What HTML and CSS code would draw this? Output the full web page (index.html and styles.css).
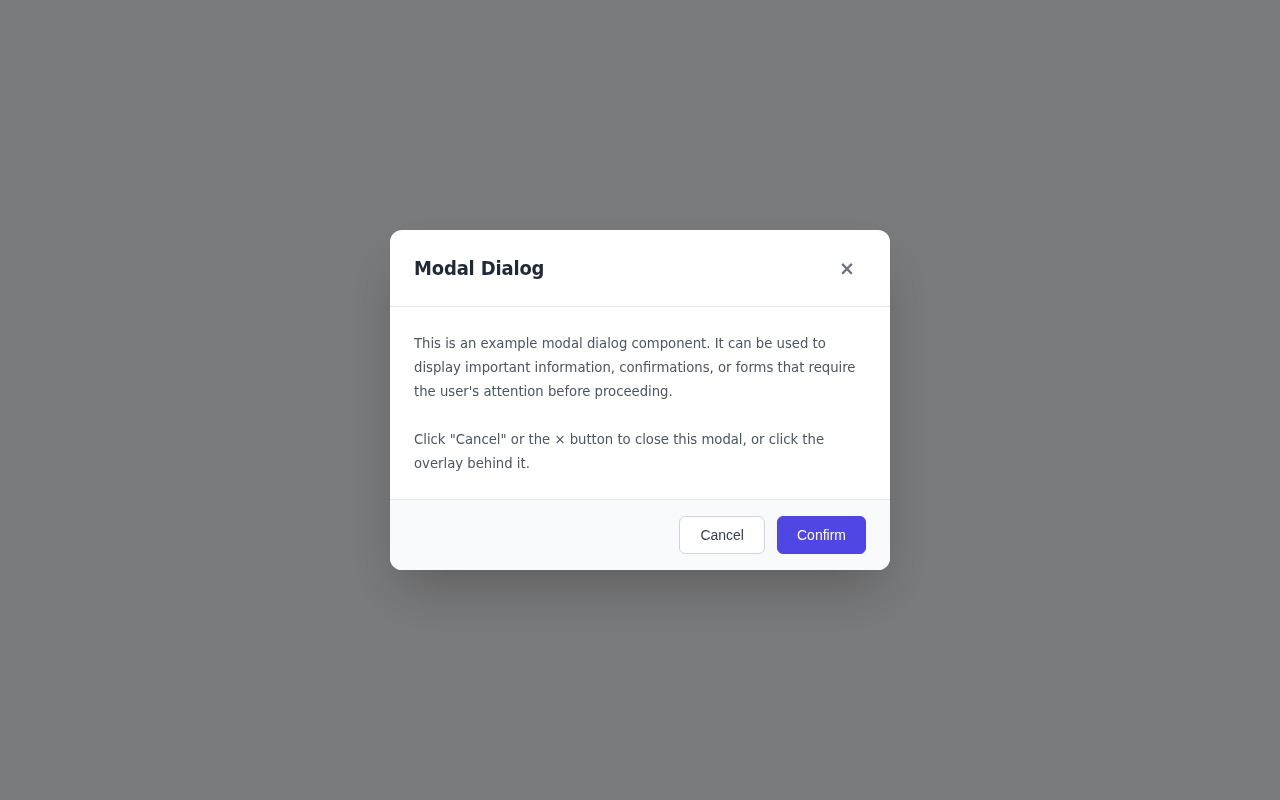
FILE: index.html
```html
<!DOCTYPE html>
<html lang="en">
<head>
<meta charset="utf-8">
<title>Modal Dialog</title>
<link rel="stylesheet" href="styles.css">
</head>
<body>
<div class="overlay">
  <div class="modal" role="dialog" aria-labelledby="modal-title">
    <div class="modal-header">
      <h2 class="modal-title" id="modal-title">Modal Dialog</h2>
      <button class="close-btn" aria-label="Close">×</button>
    </div>
    <div class="modal-body">
      <p>This is an example modal dialog component. It can be used to display important information, confirmations, or forms that require the user's attention before proceeding.</p>
      <p class="spaced">Click "Cancel" or the × button to close this modal, or click the overlay behind it.</p>
    </div>
    <div class="modal-footer">
      <button class="btn btn-cancel">Cancel</button>
      <button class="btn btn-confirm">Confirm</button>
    </div>
  </div>
</div>
</body>
</html>
```
FILE: styles.css
```css
html, body {
  margin: 0;
  padding: 0;
  height: 100%;
}
body {
  background: #f3f4f6;
  font-family: "DejaVu Sans Condensed", "DejaVu Sans", sans-serif;
}
.overlay {
  position: fixed;
  inset: 0;
  background: rgba(0, 0, 0, 0.5);
  display: flex;
  align-items: center;
  justify-content: center;
}
.modal {
  width: 500px;
  background: #ffffff;
  border-radius: 12px;
  box-shadow: 0 25px 50px -12px rgba(0, 0, 0, 0.25);
  overflow: hidden;
}
.modal-header {
  display: flex;
  align-items: center;
  justify-content: space-between;
  padding: 24px;
  border-bottom: 1px solid #e5e7eb;
}
.modal-title {
  margin: 0;
  font-size: 20px;
  letter-spacing: -0.17px;
  line-height: 28px;
  font-weight: 700;
  color: #1f2937;
}
.close-btn {
  border: none;
  background: none;
  padding: 0;
  width: 24px;
  height: 24px;
  font-family: "DejaVu Sans", sans-serif;
  font-size: 19px;
  font-weight: 700;
  line-height: 22px;
  color: #6b7280;
  cursor: pointer;
  margin-right: 7px;
}
.modal-body {
  padding: 24px;
  color: #4b5563;
  font-size: 14.7px;
  line-height: 24px;
}
.modal-body p {
  margin: 0;
}
.modal-body p.spaced {
  margin-top: 24px;
}
.modal-footer {
  display: flex;
  justify-content: flex-end;
  gap: 12px;
  padding: 16px 24px;
  background: #f9fafb;
  border-top: 1px solid #e5e7eb;
}
.btn {
  font-family: "Liberation Sans", Arial, sans-serif;
  font-size: 14px;
  line-height: 16px;
  padding: 10px 20px;
  border-radius: 6px;
  cursor: pointer;
}
.btn-cancel {
  background: #ffffff;
  border: 1px solid #d1d5db;
  color: #374151;
}
.btn-confirm {
  background: #4f46e5;
  border: 1px solid #4f46e5;
  color: #ffffff;
  padding: 10px 19px;
}
```
